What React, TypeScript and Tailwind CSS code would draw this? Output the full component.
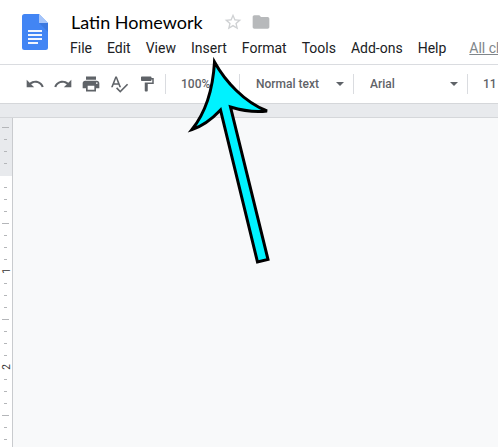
import type { ReactNode } from 'react';
import { MdFolder, MdFormatPaint, MdPrint, MdRedo, MdSpellcheck, MdStarBorder, MdUndo } from 'react-icons/md';

const menus = ['File', 'Edit', 'View', 'Insert', 'Format', 'Tools', 'Add-ons', 'Help'];

const actions = [
	{ label: 'Undo', icon: <MdUndo size={20} /> },
	{ label: 'Redo', icon: <MdRedo size={20} /> },
	{ label: 'Print', icon: <MdPrint size={20} /> },
	{ label: 'Spelling and grammar check', icon: <MdSpellcheck size={20} /> },
	{ label: 'Paint format', icon: <MdFormatPaint size={18} /> },
];

// One entry per eighth of an inch, starting in the top margin
const marks = Array.from({ length: 27 }, (_, i) => i - 4);

const DocsLogo = () => (
	<svg width="26" height="36" viewBox="0 0 26 36" aria-hidden="true">
		<path d="M2.5 0H17l9 9v24.500a2.500 2.500 0 0 1-2.500 2.500h-21A2.500 2.500 0 0 1 0 33.500v-31A2.500 2.500 0 0 1 2.500 0z" fill="#4285f4" />
		<path d="M17 9h9v9z" fill="#3b78e0" />
		<path d="M17 0l9 9h-9z" fill="#a6c5fa" />
		<path d="M6 16h14v2H6zM6 20h14v2H6zM6 24h14v2H6zM6 28h10v2H6z" fill="#f1f5fe" />
	</svg>
);

const Divider = () => <div className="h-5 w-px shrink-0 bg-[#dadce0]" />;

interface PickerProps {
	label: string;
	value: string;
	className: string;
	children?: ReactNode;
}

const Picker = ({ label, value, className, children }: PickerProps) => (
	<div className={`flex shrink-0 items-center ${className}`}>
		<select
			aria-label={label}
			defaultValue={value}
			className="min-w-0 flex-1 appearance-none bg-transparent text-xs font-medium text-[#5f6368] outline-none"
		>
			<option>{value}</option>
		</select>
		{children}
	</div>
);

const Caret = () => (
	<svg width="8" height="4" viewBox="0 0 8 4" className="shrink-0" aria-hidden="true">
		<path d="M0 0h8L4 4z" fill="#5f6368" />
	</svg>
);

const Ruler = () => (
	<div className="w-[13px] shrink-0 overflow-hidden border-r border-[#c9cbce] bg-white">
		<div className="h-[58px] bg-[#e8eaed] pt-[3px]">
			{marks.slice(0, 4).map((mark) => (
				<Mark key={mark} mark={mark} />
			))}
		</div>
		<div className="pt-[5px]">
			{marks.slice(5).map((mark) => (
				<Mark key={mark} mark={mark} />
			))}
		</div>
	</div>
);

const Mark = ({ mark }: { mark: number }) => {
	if (mark % 8 === 0) {
		return (
			<div className="flex h-3 items-center justify-center pl-[2px]">
				<span className="-rotate-90 text-[10px] leading-3 text-[#333]">{mark / 8}</span>
			</div>
		);
	}
	return (
		<div className="flex h-3 items-center pl-[2px]">
			{mark % 4 === 0 ? (
				<div className="h-px w-[7px] bg-[#b4b6b9]" />
			) : (
				<div className="ml-[2px] h-px w-[3px] bg-[#b4b6b9]" />
			)}
		</div>
	);
};

export default function App() {
	return (
		<div className="relative flex min-h-screen flex-col overflow-hidden bg-[#f8f9fa] font-['Roboto',sans-serif]">
			<header className="flex h-[65px] shrink-0 border-b border-[#dadce0] bg-white pl-[22px]">
				<a href="#home" aria-label="Docs home" className="mt-[14px] shrink-0">
					<DocsLogo />
				</a>
				<div className="min-w-0 flex-1 pt-[10px] pl-[22px]">
					<div className="flex h-6 items-center">
						<input
							aria-label="Document title"
							defaultValue="Latin Homework"
							className="w-[153px] pl-px font-['Lato',sans-serif] text-[18px] leading-6 text-black outline-none"
						/>
						<button type="button" aria-label="Star" className="text-[#cfd1d3]">
							<MdStarBorder size={20} />
						</button>
						<button type="button" aria-label="Move to folder" className="ml-2 text-[#b7b9bb]">
							<MdFolder size={20} />
						</button>
					</div>
					<nav className="flex h-7 items-center gap-[15px] text-sm whitespace-nowrap text-[#202124]">
						{menus.map((menu) => (
							<button key={menu} type="button">
								{menu}
							</button>
						))}
						<a href="#history" className="ml-2 text-[#80868b] underline">
							All changes saved in Drive
						</a>
					</nav>
				</div>
			</header>

			<div className="flex h-[38px] shrink-0 items-center bg-white pl-[21px]">
				{actions.map(({ label, icon }) => (
					<button
						key={label}
						type="button"
						aria-label={label}
						className="flex h-7 w-7 shrink-0 items-center justify-center text-[#5f6368]"
					>
						{icon}
					</button>
				))}
				<div className="w-1 shrink-0" />
				<Divider />
				<Picker label="Zoom" value="100%" className="w-[73px] pr-2 pl-[15px]">
					<Caret />
				</Picker>
				<Divider />
				<Picker label="Styles" value="Normal text" className="w-[113px] pr-[9px] pl-4">
					<Caret />
				</Picker>
				<Divider />
				<Picker label="Font" value="Arial" className="w-[113px] pr-[9px] pl-4">
					<Caret />
				</Picker>
				<Divider />
				<Picker label="Font size" value="11" className="w-14 pr-2 pl-[15px]">
					<Caret />
				</Picker>
			</div>

			<div className="h-[15px] shrink-0 border-y border-[#d5d7da] bg-[#e8eaed]" />

			<div className="flex flex-1">
				<Ruler />
				<main className="flex-1" />
			</div>

			{/* Pointer to the Insert menu */}
			<svg className="pointer-events-none absolute top-[50px] left-[180px]" width="100" height="220" viewBox="0 0 100 220" aria-hidden="true">
				<path
					d="M34.500 12C45 31 64 52 87 61C75 62.500 62 60.500 50.500 57L88 209.500L77.500 212L40.500 60C32 69 23 76 12 79.500C26 62 33 38 34.500 12z"
					fill="#00f2ff"
					stroke="#000"
					strokeWidth="3"
				/>
			</svg>
		</div>
	);
}
